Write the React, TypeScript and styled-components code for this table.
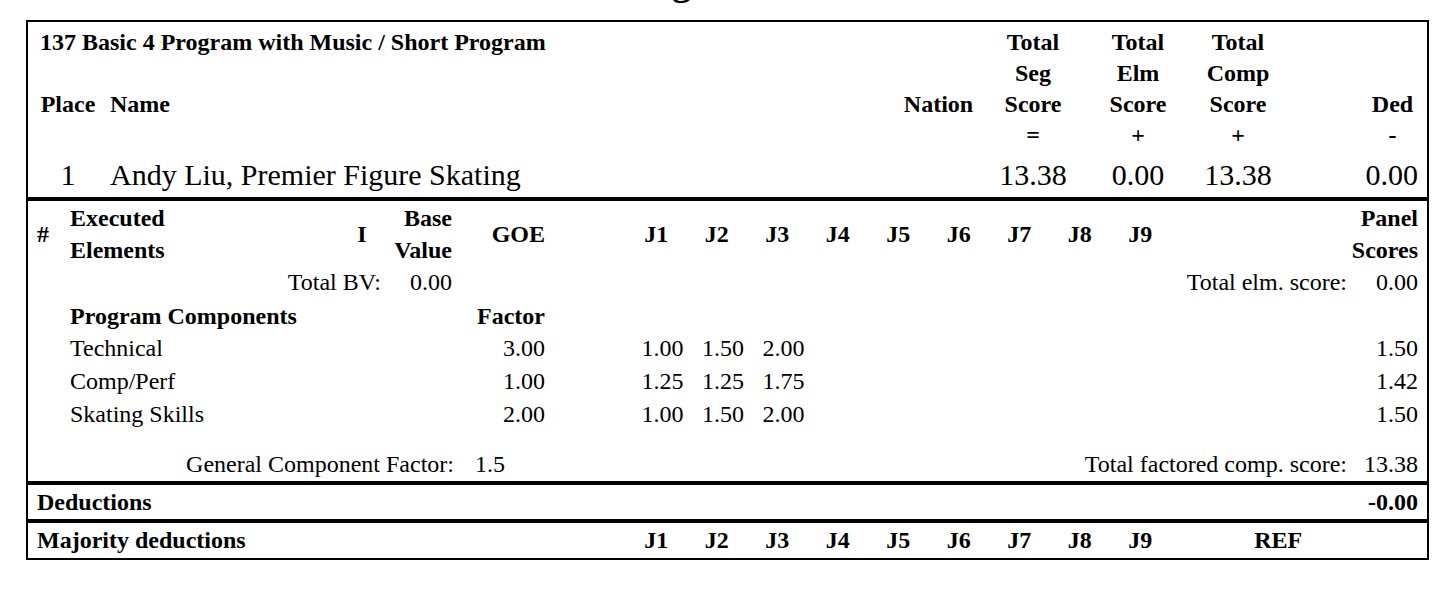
import React from "react";
import styled, { createGlobalStyle } from "styled-components";

const GlobalStyle = createGlobalStyle`
  html, body {
    margin: 0;
    padding: 0;
    background: #fff;
  }
  body {
    font-family: "Liberation Serif", "Times New Roman", serif;
    color: #000;
  }
`;

const Page = styled.div`
  display: flow-root;
  padding-left: 26px;
`;

const PageTitle = styled.h1`
  width: 1403px;
  height: 38px;
  margin: -37px 0 19px;
  font-size: 38px;
  line-height: 38px;
  font-weight: bold;
  text-align: center;
  white-space: nowrap;
`;

const Sheet = styled.div`
  box-sizing: border-box;
  width: 1403px;
  border: 2px solid #000;
  font-size: 24px;
`;

type Align = "left" | "center" | "right";

const justify = (a?: Align) =>
  a === "right" ? "flex-end" : a === "center" ? "center" : "flex-start";

const Cell = styled.div<{ $align?: Align; $span?: number; $pl?: number; $pr?: number }>`
  grid-column: span ${({ $span }) => $span ?? 1};
  display: flex;
  align-items: center;
  justify-content: ${({ $align }) => justify($align)};
  text-align: ${({ $align }) => $align ?? "left"};
  padding-left: ${({ $pl }) => $pl ?? 0}px;
  padding-right: ${({ $pr }) => $pr ?? 0}px;
  white-space: nowrap;
  min-width: 0;
`;

const Head = styled(Cell)`
  font-weight: bold;
  line-height: 32px;
`;

const BigValue = styled(Cell)`
  font-size: 30px;
  padding-top: 2px;
`;

const HeaderGrid = styled.div`
  display: grid;
  grid-template-columns: 80px 792px 77px 112px 98px 102px 69px 69px;
  grid-template-rows: repeat(4, 31px) 47px;
  padding-top: 4px;
`;

const DetailGrid = styled.div`
  display: grid;
  grid-template-columns: 30px 282px 44px 71px 93px 78px repeat(9, 60.5px) 181.5px 75px;
  grid-template-rows: 65px repeat(5, 33px) 50px;
  border-top: 4px solid #000;
`;

const FooterCell = styled(Cell)`
  align-self: end;
  height: 33px;
`;

const DeductionRow = styled.div`
  display: flex;
  justify-content: space-between;
  align-items: center;
  height: 34px;
  padding: 0 9px;
  border-top: 4px solid #000;
  font-weight: bold;
`;

const MajorityRow = styled.div`
  display: grid;
  grid-template-columns: 598px repeat(9, 60.5px) 181.5px 75px;
  height: 35px;
  border-top: 4px solid #000;
  font-weight: bold;
`;

const judges = ["J1", "J2", "J3", "J4", "J5", "J6", "J7", "J8", "J9"];

const components = [
  { name: "Technical", factor: "3.00", marks: ["1.00", "1.50", "2.00"], panel: "1.50" },
  { name: "Comp/Perf", factor: "1.00", marks: ["1.25", "1.25", "1.75"], panel: "1.42" },
  { name: "Skating Skills", factor: "2.00", marks: ["1.00", "1.50", "2.00"], panel: "1.50" },
];

export default function App() {
  return (
    <Page>
      <GlobalStyle />
      <PageTitle>Judges Details</PageTitle>
      <Sheet>
        <HeaderGrid>
          <Head $span={2} $pl={12}>137 Basic 4 Program with Music / Short Program</Head>
          <Cell />
          <Head $align="center">Total</Head>
          <Head $align="center">Total</Head>
          <Head $align="center">Total</Head>
          <Cell $span={2} />

          <Cell $span={3} />
          <Head $align="center">Seg</Head>
          <Head $align="center">Elm</Head>
          <Head $align="center">Comp</Head>
          <Cell $span={2} />

          <Head $align="center">Place</Head>
          <Head $pl={2}>Name</Head>
          <Head $align="center">Nation</Head>
          <Head $align="center">Score</Head>
          <Head $align="center">Score</Head>
          <Head $align="center">Score</Head>
          <Cell />
          <Head $align="center">Ded</Head>

          <Cell $span={3} />
          <Head $align="center">=</Head>
          <Head $align="center">+</Head>
          <Head $align="center">+</Head>
          <Cell />
          <Head $align="center">-</Head>

          <BigValue $align="center">1</BigValue>
          <BigValue $pl={2}>Andy Liu, Premier Figure Skating</BigValue>
          <Cell />
          <BigValue $align="center">13.38</BigValue>
          <BigValue $align="center">0.00</BigValue>
          <BigValue $align="center">13.38</BigValue>
          <Cell />
          <BigValue $align="right" $pr={9}>0.00</BigValue>
        </HeaderGrid>

        <DetailGrid>
          <Head $align="center">#</Head>
          <Head $pl={12}>
            Executed
            <br />
            Elements
          </Head>
          <Head $align="center">I</Head>
          <Head $align="right" $pr={3}>
            Base
            <br />
            Value
          </Head>
          <Head $align="right" $pr={3}>GOE</Head>
          <Cell />
          {judges.map((j) => (
            <Head key={j} $align="center">{j}</Head>
          ))}
          <Cell />
          <Head $align="right" $pr={9}>
            Panel
            <br />
            Scores
          </Head>

          <Cell $span={3} $align="right" $pr={3}>Total BV:</Cell>
          <Cell $align="right" $pr={3}>0.00</Cell>
          <Cell $span={11} />
          <Cell $align="right" $pr={5}>Total elm. score:</Cell>
          <Cell $align="right" $pr={9}>0.00</Cell>

          <Cell />
          <Head $span={3} $pl={12}>Program Components</Head>
          <Head $align="right" $pr={3}>Factor</Head>
          <Cell $span={12} />

          {components.map((c) => (
            <React.Fragment key={c.name}>
              <Cell />
              <Cell $span={3} $pl={12}>{c.name}</Cell>
              <Cell $align="right" $pr={3}>{c.factor}</Cell>
              <Cell />
              {c.marks.map((m, i) => (
                <Cell key={i} $align="right" $pr={3}>{m}</Cell>
              ))}
              <Cell $span={7} />
              <Cell $align="right" $pr={9}>{c.panel}</Cell>
            </React.Fragment>
          ))}

          <FooterCell $span={4} $align="right" $pr={1}>General Component Factor:</FooterCell>
          <FooterCell $pl={20}>1.5</FooterCell>
          <FooterCell $span={11} $align="right" $pr={5}>Total factored comp. score:</FooterCell>
          <FooterCell $align="right" $pr={9}>13.38</FooterCell>
        </DetailGrid>

        <DeductionRow>
          <span>Deductions</span>
          <span>-0.00</span>
        </DeductionRow>

        <MajorityRow>
          <Cell $pl={9}>Majority deductions</Cell>
          {judges.map((j) => (
            <Cell key={j} $align="center">{j}</Cell>
          ))}
          <Cell $align="center" $pl={34}>REF</Cell>
          <Cell />
        </MajorityRow>
      </Sheet>
    </Page>
  );
}
